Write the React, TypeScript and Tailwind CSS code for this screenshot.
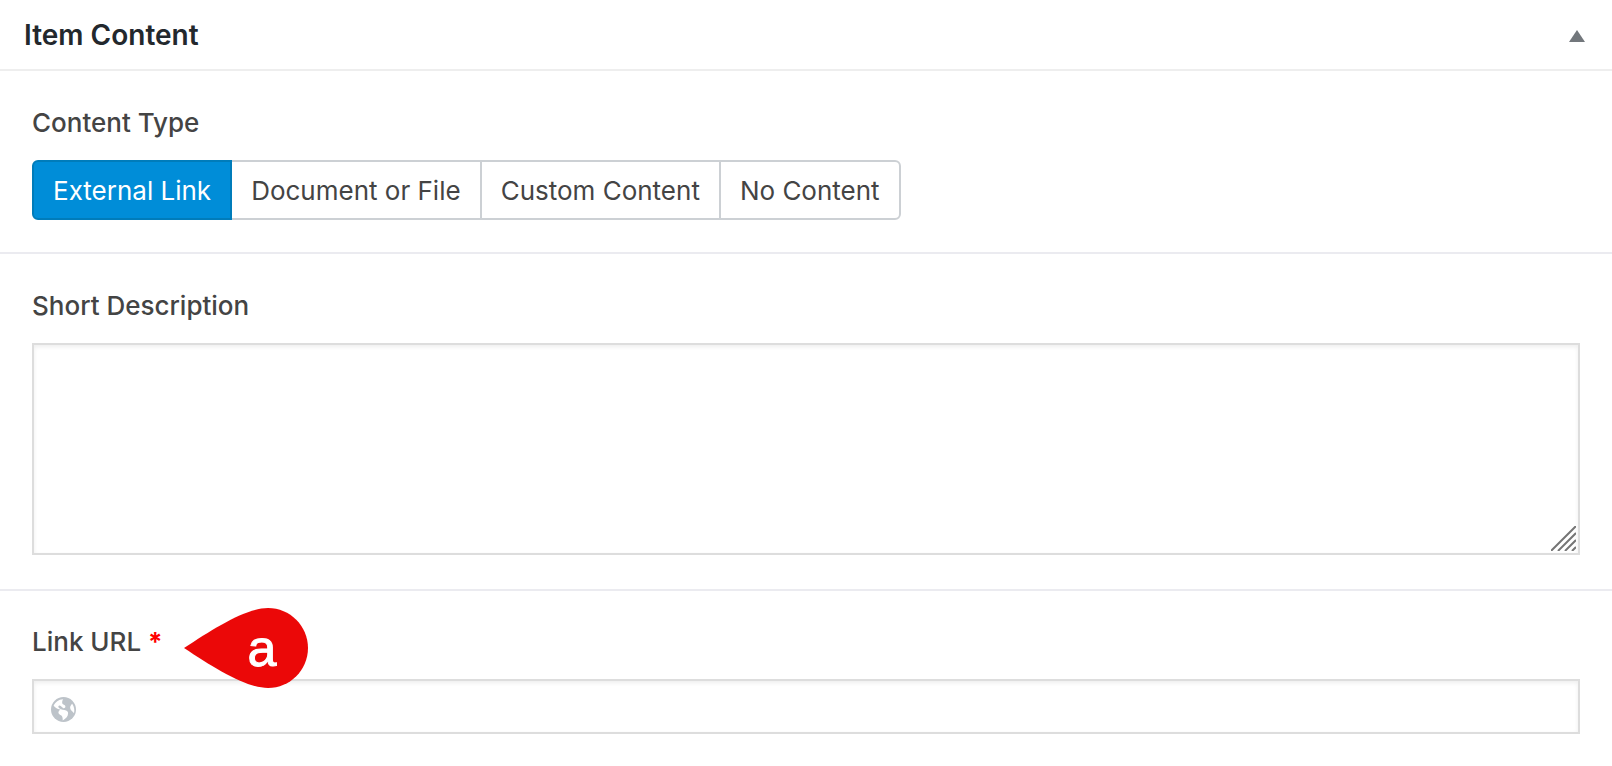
import React, { useState } from 'react';
import clsx from 'clsx';

const CONTENT_TYPES = ['External Link', 'Document or File', 'Custom Content', 'No Content'];

function GlobeIcon({ className }: { className?: string }) {
  return (
    <svg viewBox="0 0 25 25" className={className} aria-hidden="true">
      <circle cx="12.5" cy="12.5" r="12.5" fill="currentColor" />
      {/* Land */}
      <g fill="#ffffff">
        <path d="M2.6 8.8C4.3 5 7.6 2.4 12 2.2C11.2 3.8 10.8 5.6 11.6 7C12.6 7.6 14.3 8 14.4 9.6C14.4 10.8 13.4 11.6 12.4 11.2C11 10.8 10.2 9 8.8 8.6C7.6 8.4 7 9.4 7.6 10.4C8.6 12 11 12.6 13.4 13C16 13.4 17.3 14.6 17.1 16.6C16.9 19.6 14.8 22 11.7 23.4C11.8 21.4 11.6 19.6 10.4 18.4C9 17.6 7.4 17 7.4 15.4C7.6 14.2 8.4 13.2 9.6 12.6C7.4 12.2 5.4 11.2 3.9 9.9Z" />
        <path d="M21.2 6.8C23.2 9.8 23.8 13 23 16.2C22.2 14.6 19.6 13.8 19.2 11.2C18.8 9.6 19.8 8.2 21.2 6.8Z" />
      </g>
    </svg>
  );
}

export default function App() {
  const [contentType, setContentType] = useState('External Link');
  const [isOpen, setIsOpen] = useState(true);

  return (
    <div className="min-h-screen bg-white font-['Inter',sans-serif] text-[26px] leading-[39px] text-[#444444]">
      {/* Panel header */}
      <div className="flex items-center justify-between border-b-2 border-[#eeeeee] pt-4 pr-[27px] pb-[14px] pl-6">
        <h2 className="text-[28px] font-semibold text-[#23282d]">Item Content</h2>
        <button type="button" aria-label="Toggle panel" onClick={() => setIsOpen(!isOpen)}>
          <svg viewBox="0 0 16 12" className="h-3 w-4" fill="#72777c">
            <path d="M8 0l8 12H0z" />
          </svg>
        </button>
      </div>

      {isOpen && (
        <div>
          {/* Content type */}
          <fieldset className="border-b-2 border-[#ebebf0] p-8">
            <legend className="float-left mb-[18px] w-full font-medium">Content Type</legend>
            <div className="clear-both flex">
              {CONTENT_TYPES.map((type) => (
                <button
                  key={type}
                  type="button"
                  aria-pressed={type === contentType}
                  onClick={() => setContentType(type)}
                  className={clsx(
                    '-ml-[2px] h-[60px] border-2 px-[19px] first:ml-0 first:rounded-l-md last:rounded-r-md',
                    type === contentType
                      ? 'relative border-[#007cba] bg-[#008dd8] text-white'
                      : 'border-[#ccd0d4] bg-white'
                  )}
                >
                  {type}
                </button>
              ))}
            </div>
          </fieldset>

          {/* Short description */}
          <div className="border-b-2 border-[#ebebf0] px-8 pt-8 pb-[34px]">
            <label htmlFor="short-description" className="mb-[18px] block font-medium">Short Description</label>
            <div className="relative">
              <textarea
                id="short-description"
                className="block h-[212px] w-full resize-none border-2 border-[#dddddd] px-3 py-2 shadow-[inset_0_2px_4px_rgba(0,0,0,0.07)] outline-none"
              />
              <svg viewBox="0 0 25 25" className="pointer-events-none absolute right-1 bottom-1 size-[25px]" stroke="#757575" strokeWidth="2" fill="none">
                <path d="M0 25L25 0M7 25L25 7M14 25L25 14M21 25L25 21" />
              </svg>
            </div>
          </div>

          {/* Link URL */}
          <div className="px-8 pt-[31px] pb-8">
            <div className="relative mb-[18px] flex">
              <label htmlFor="link-url" className="font-medium">
                Link URL <span className="font-bold text-[#ff0000]">*</span>
              </label>
              <div className="absolute -top-[14px] left-[152px] z-10 h-20 w-[124px]">
                <svg viewBox="0 0 124 80" className="size-full" fill="#eb0808">
                  <path d="M0 40C30 20 62 0 84 0C106 0 124 18 124 40S106 80 84 80C62 80 30 60 0 40Z" />
                </svg>
                <span className="absolute inset-0 flex items-center justify-center pl-8 font-['Liberation_Sans',sans-serif] text-[52px] text-white [-webkit-text-stroke:1px_white]">a</span>
              </div>
            </div>
            <div className="relative">
              <GlobeIcon className="absolute top-[18px] left-[19px] size-[25px] text-[#bdc3c9]" />
              <input
                id="link-url"
                type="url"
                required
                className="block h-[55px] w-full border-2 border-[#dddddd] pr-3 pl-14 shadow-[inset_0_2px_4px_rgba(0,0,0,0.07)] outline-none"
              />
            </div>
          </div>
        </div>
      )}
    </div>
  );
}
